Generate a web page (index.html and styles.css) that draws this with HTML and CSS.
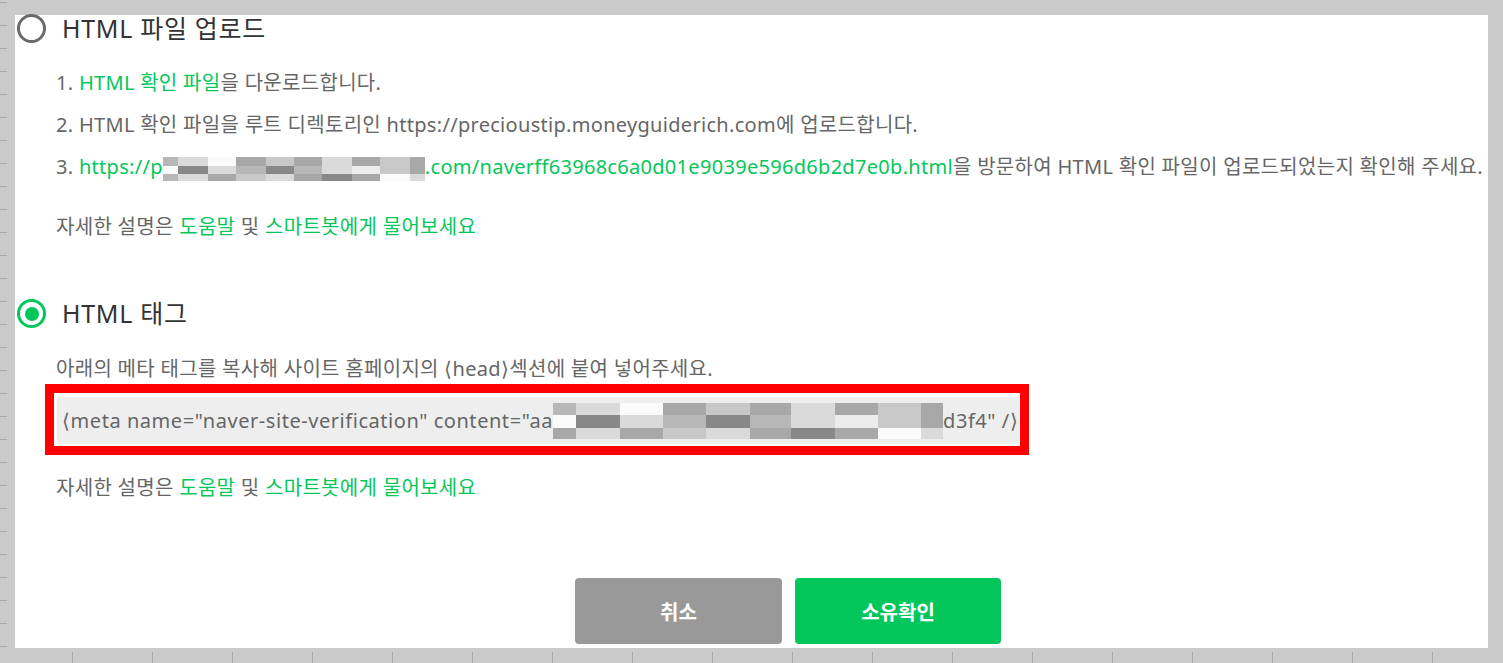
FILE: index.html
```html
<!DOCTYPE html>
<html lang="ko">
<head>
    <meta charset="UTF-8">
    <meta name="viewport" content="width=device-width, initial-scale=1.0">
    <title>사이트 소유확인</title>
    <link rel="stylesheet" href="styles.css">
</head>
<body>

<div class="ruler-left"></div>
<div class="ruler-bottom"></div>

<div class="panel">

    <!-- HTML 파일 업로드 -->
    <div class="option">
        <span class="radio"></span>
        <span class="option-title">HTML 파일 업로드</span>
    </div>
    <ol class="steps">
        <li>1. <span class="green">HTML 확인 파일</span>을 다운로드합니다.</li>
        <li>2. HTML 확인 파일을 루트 디렉토리인 https://precioustip.moneyguiderich.com에 업로드합니다.</li>
        <li>3. <span class="green">https://p<span class="mosaic mosaic-url">
            <i class="g4"></i><i class="g2"></i><i class="g0"></i><i class="g5"></i><i class="g3"></i><i class="g5"></i><i class="g2"></i><i class="g5"></i><i class="g3"></i><i class="g5"></i>
            <i class="g0"></i><i class="g6"></i><i class="g2"></i><i class="g4"></i><i class="g6"></i><i class="g4"></i><i class="g2"></i><i class="g1"></i><i class="g3"></i><i class="g5"></i>
            <i class="g4"></i><i class="g2"></i><i class="g5"></i><i class="g3"></i><i class="g2"></i><i class="g5"></i><i class="g6"></i><i class="g5"></i><i class="g0"></i><i class="g2"></i>
        </span>.com/naverff63968c6a0d01e9039e596d6b2d7e0b.html</span>을 방문하여 HTML 확인 파일이 업로드되었는지 확인해 주세요.</li>
    </ol>
    <p class="help help-first">자세한 설명은 <span class="green">도움말</span> 및 <span class="green">스마트봇에게 물어보세요</span></p>

    <!-- HTML 태그 -->
    <div class="option option-tag">
        <span class="radio checked"></span>
        <span class="option-title">HTML 태그</span>
    </div>
    <p class="desc">아래의 메타 태그를 복사해 사이트 홈페이지의 ⟨head⟩섹션에 붙여 넣어주세요.</p>
    <div class="highlight">
        <div class="code-box">⟨meta name="naver-site-verification" content="aa<span class="mosaic mosaic-code">
            <i class="g4"></i><i class="g2"></i><i class="g0"></i><i class="g5"></i><i class="g3"></i><i class="g5"></i><i class="g2"></i><i class="g5"></i><i class="g3"></i><i class="g5"></i>
            <i class="g0"></i><i class="g6"></i><i class="g2"></i><i class="g4"></i><i class="g6"></i><i class="g4"></i><i class="g2"></i><i class="g1"></i><i class="g3"></i><i class="g5"></i>
            <i class="g5"></i><i class="g2"></i><i class="g5"></i><i class="g3"></i><i class="g2"></i><i class="g5"></i><i class="g6"></i><i class="g5"></i><i class="g0"></i><i class="g2"></i>
        </span>d3f4" /⟩</div>
    </div>
    <p class="help help-second">자세한 설명은 <span class="green">도움말</span> 및 <span class="green">스마트봇에게 물어보세요</span></p>

    <!-- 버튼 -->
    <div class="buttons">
        <button class="btn btn-cancel">취소</button>
        <button class="btn btn-confirm">소유확인</button>
    </div>
</div>

</body>
</html>
```

FILE: styles.css
```css
body {
    margin: 0;
    height: 663px;
    overflow: hidden;
    background-color: #cbcbcb;
    font-family: "Noto Sans", "Noto Sans CJK KR", sans-serif;
    color: #666;
    display: grid;
    grid-template-columns: 15px 1473px 15px;
    grid-template-rows: 15px 633px 15px;
}

/* 눈금자 */
.ruler-left {
    grid-column: 1;
    grid-row: 1 / 4;
    background: linear-gradient(to bottom, #a9a9a9 1px, transparent 1px) 0 2px / 7px 23px repeat-y;
}
.ruler-bottom {
    grid-column: 1 / 4;
    grid-row: 3;
    background: linear-gradient(to right, #a9a9a9 1px, transparent 1px) 72px 4px / 80px 11px repeat-x;
}

/* 흰색 패널 */
.panel {
    grid-column: 2;
    grid-row: 2;
    background-color: #fff;
    display: flex;
    flex-direction: column;
    align-items: flex-start;
    letter-spacing: 0.3px;
}

.option {
    display: flex;
    align-items: center;
    gap: 16px;
    height: 29px;
    margin-top: -1px;
    padding-left: 2px;
}
.option-tag {
    margin-top: 60px;
}
.option-title {
    font-size: 25px;
    line-height: 29px;
    letter-spacing: 0.7px;
    color: #333;
}

.radio {
    width: 29px;
    height: 29px;
    box-sizing: border-box;
    border: 3px solid #6a6a6a;
    border-radius: 50%;
    display: flex;
    align-items: center;
    justify-content: center;
}
.radio.checked {
    border-color: #03c75a;
}
.radio.checked::after {
    content: "";
    width: 14px;
    height: 14px;
    border-radius: 50%;
    background-color: #03c75a;
}

.green {
    color: #03c75a;
}

.steps {
    list-style: none;
    margin: 19px 0 0;
    padding: 0 0 0 41px;
    font-size: 20px;
    line-height: 42px;
    white-space: nowrap;
}

.help {
    margin: 0;
    padding-left: 41px;
    font-size: 20px;
    line-height: 24px;
}
.help-first {
    margin-top: 27px;
}
.help-second {
    margin-top: 21px;
}

.desc {
    margin: 29px 0 0;
    padding-left: 41px;
    font-size: 20px;
    line-height: 24px;
}

/* 빨간 강조 박스 */
.highlight {
    margin: 3px 0 0 30px;
    width: 984px;
    height: 71px;
    box-sizing: border-box;
    border: 9px solid #ff0000;
    padding: 4px 1px 2px 3px;
}
.code-box {
    height: 100%;
    background-color: #eeeeee;
    padding-left: 5px;
    font-size: 20px;
    line-height: 47px;
    letter-spacing: 0.55px;
    white-space: nowrap;
    display: flex;
    align-items: center;
}

/* 모자이크 */
.mosaic {
    display: inline-grid;
    vertical-align: middle;
}
.mosaic-url {
    grid-template-columns: 15px 30px 28px 30px 28px 28px 30px 28px 30px 15px;
    grid-template-rows: 9px 8px 7px;
}
.mosaic-code {
    grid-template-columns: 23px 44px 43px 43px 44px 41px 44px 43px 43px 22px;
    grid-template-rows: 12px 13px 11px;
}
.g0 { background-color: #fbfbfb; }
.g1 { background-color: #ececec; }
.g2 { background-color: #dadada; }
.g3 { background-color: #c8c8c8; }
.g4 { background-color: #b7b7b7; }
.g5 { background-color: #a8a8a8; }
.g6 { background-color: #888888; }

/* 버튼 */
.buttons {
    display: flex;
    gap: 13px;
    margin-top: 78px;
    padding-left: 560px;
}
.btn {
    width: 207px;
    height: 66px;
    border: none;
    border-radius: 4px;
    color: #fff;
    font-family: "Noto Sans CJK KR", sans-serif;
    font-size: 20px;
    font-weight: bold;
    cursor: pointer;
}
.btn-cancel {
    background-color: #999999;
}
.btn-confirm {
    width: 206px;
    background-color: #03c75a;
}
```
